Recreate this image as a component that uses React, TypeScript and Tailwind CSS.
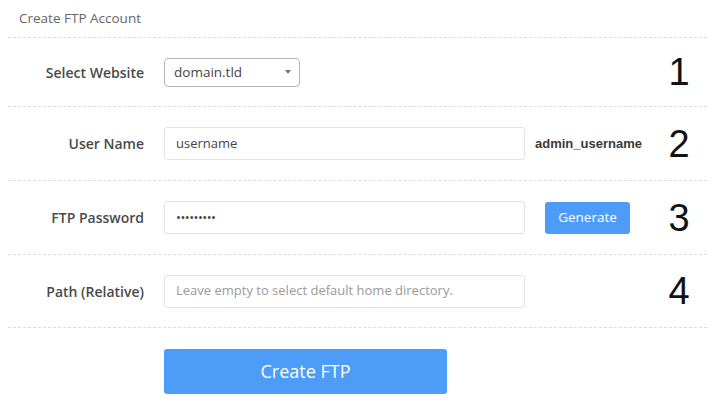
import React from "react";

const font = { fontFamily: '"Open Sans", "Noto Sans", sans-serif' };

function Row({
  label,
  children,
  num,
  h,
}: {
  label: string;
  children: React.ReactNode;
  num: string;
  h: string;
}) {
  return (
    <div className={`flex items-center border-b border-dashed border-[#dcdcdc] ${h}`}>
      <div className="w-[136px] text-right text-[14px] font-semibold text-[#4a4a4a]">{label}</div>
      <div className="ml-5 flex items-center">{children}</div>
      <div
        className="ml-auto mr-[10px] w-[36px] text-center text-[38px] leading-none text-[#111]"
        style={{ fontFamily: '"Liberation Sans", Arial, sans-serif' }}
      >
        {num}
      </div>
    </div>
  );
}

export default function App() {
  return (
    <div className="h-[405px] w-[715px] bg-white" style={font}>
      <div className="mx-[8px]">
        <div className="flex h-[38px] items-center border-b border-dashed border-[#dcdcdc] pl-[11px] text-[13.5px] text-[#666]">
          Create FTP Account
        </div>
        <Row label="Select Website" num="1" h="h-[69px]">
          <div className="flex h-[29px] w-[136px] items-center justify-between rounded-[4px] border border-[#b5b5b5] pl-[9px] pr-[8px] text-[13.5px] text-[#444]">
            <span>domain.tld</span>
            <svg width="6" height="4" viewBox="0 0 6 4">
              <path d="M0 0 L6 0 L3 4 Z" fill="#777" />
            </svg>
          </div>
        </Row>
        <Row label="User Name" num="2" h="h-[74px]">
          <div className="flex h-[33px] w-[361px] items-center rounded-[3px] border border-[#e3e3e3] pl-[11px] text-[13px] text-[#444]">
            username
          </div>
          <div
            className="ml-[10px] text-[13px] font-bold text-[#3a3a3a]"
            style={{ fontFamily: '"Liberation Sans", Arial, sans-serif' }}
          >
            admin_username
          </div>
        </Row>
        <Row label="FTP Password" num="3" h="h-[74px]">
          <div className="flex h-[33px] w-[361px] items-center rounded-[3px] border border-[#e3e3e3] pl-[11px] text-[13px] tracking-[-0.5px] text-[#444]">
            •••••••••
          </div>
          <div className="ml-5 flex h-[32px] w-[85px] items-center justify-center rounded-[3px] bg-[#4d9df8] text-[13.5px] text-white">
            Generate
          </div>
        </Row>
        <Row label="Path (Relative)" num="4" h="h-[73px]">
          <div className="flex h-[33px] w-[361px] items-center rounded-[3px] border border-[#e3e3e3] pl-[11px] text-[13px] text-[#9a9a9a]">
            Leave empty to select default home directory.
          </div>
        </Row>
        <div className="pl-[156px] pt-[21px]">
          <div className="flex h-[45px] w-[283px] items-center justify-center rounded-[3px] bg-[#4d9df8] text-[18px] text-white">
            Create FTP
          </div>
        </div>
      </div>
    </div>
  );
}
